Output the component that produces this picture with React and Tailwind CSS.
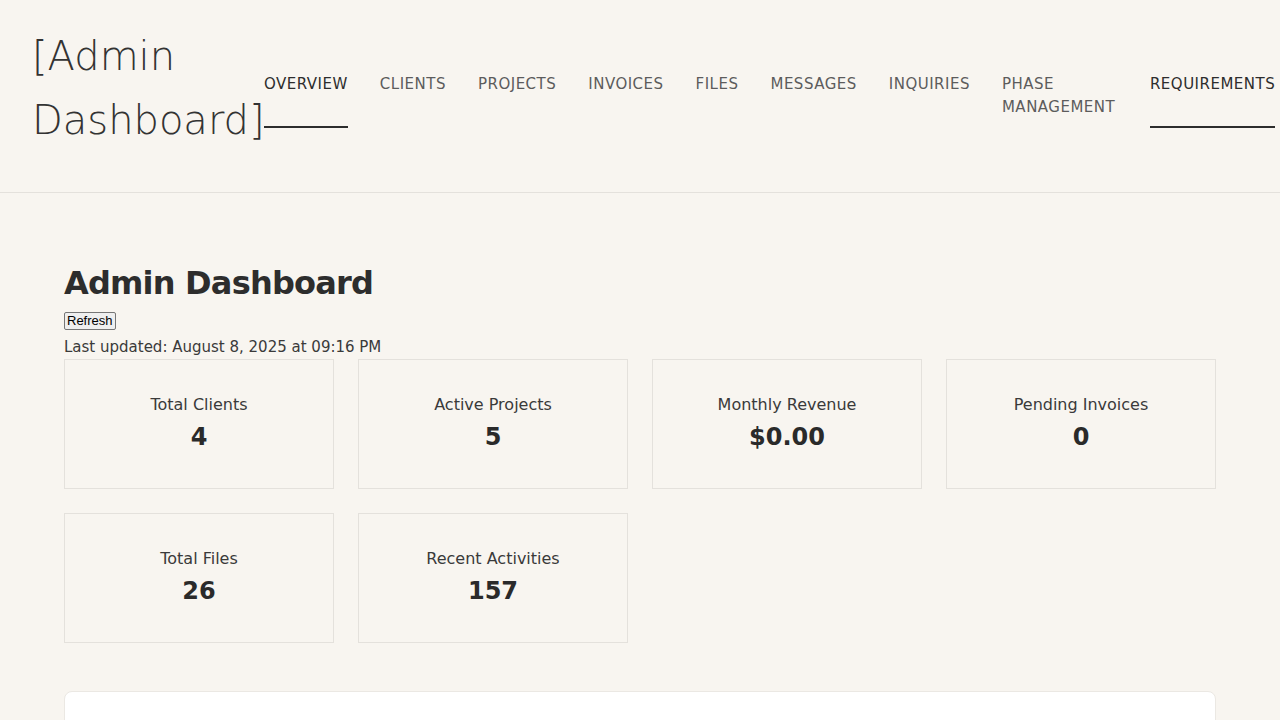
import React from 'react'

const navItems = [
  { label: 'Overview', active: true },
  { label: 'Clients' },
  { label: 'Projects' },
  { label: 'Invoices' },
  { label: 'Files' },
  { label: 'Messages' },
  { label: 'Inquiries' },
  { label: 'Phase Management', wrap: true },
  { label: 'Requirements', active: true },
]

const stats = [
  { label: 'Total Clients', value: '4' },
  { label: 'Active Projects', value: '5' },
  { label: 'Monthly Revenue', value: '$0.00' },
  { label: 'Pending Invoices', value: '0' },
  { label: 'Total Files', value: '26' },
  { label: 'Recent Activities', value: '157' },
]

const StatCard = ({ label, value }) => (
  <div className="h-[130px] border border-[#e4e1dc] flex flex-col items-center justify-center pb-[3px]">
    <div className="text-[16px] text-[#3a3a3a] leading-6">{label}</div>
    <div className="text-[24px] font-bold text-[#2a2a2a] leading-8 mt-1">{value}</div>
  </div>
)

const App = () => {
  return (
    <div className="min-h-screen bg-[#f8f5f0] text-[#2d2d2d] font-['DejaVu_Sans',sans-serif] overflow-hidden">
      <header className="h-[193px] border-b border-[#e4e1dc] flex pl-8 pt-6">
        <h1 className="text-[40px] leading-[64px] font-extralight w-[232px] shrink-0 text-[#333]">
          [Admin Dashboard]
        </h1>
        <nav className="flex items-start gap-8 pt-[49px] whitespace-nowrap">
          {navItems.map((item) => (
            <a
              key={item.label}
              href="#"
              className={
                'h-[55px] uppercase text-[15px] leading-[23px] tracking-[0.033em] border-b-2 ' +
                (item.active ? 'text-[#2d2d2d] border-[#2d2d2d]' : 'text-[#5c5c5c] border-transparent') +
                (item.wrap ? ' whitespace-normal w-[116px]' : '')
              }
            >
              {item.label}
            </a>
          ))}
        </nav>
      </header>

      <main className="px-16 pt-[70px]">
        <h2 className="text-[32px] font-bold leading-[40px] tracking-tight">Admin Dashboard</h2>
        <button className="mt-[9px] block px-[2px] text-[13px] leading-[16px] font-['Liberation_Sans',sans-serif] text-black bg-[#efefef] border border-[#767676] rounded-[2px]">
          Refresh
        </button>
        <p className="text-[15px] leading-6 mt-[5px] text-[#3a3a3a]">Last updated: August 8, 2025 at 09:16 PM</p>

        <div className="grid grid-cols-4 gap-6 max-w-[1152px]">
          {stats.map((s) => (
            <StatCard key={s.label} {...s} />
          ))}
        </div>

        <div className="mt-12 h-[200px] bg-white border border-[#ebe8e3] rounded-lg max-w-[1152px]"></div>
      </main>
    </div>
  )
}

export default App
